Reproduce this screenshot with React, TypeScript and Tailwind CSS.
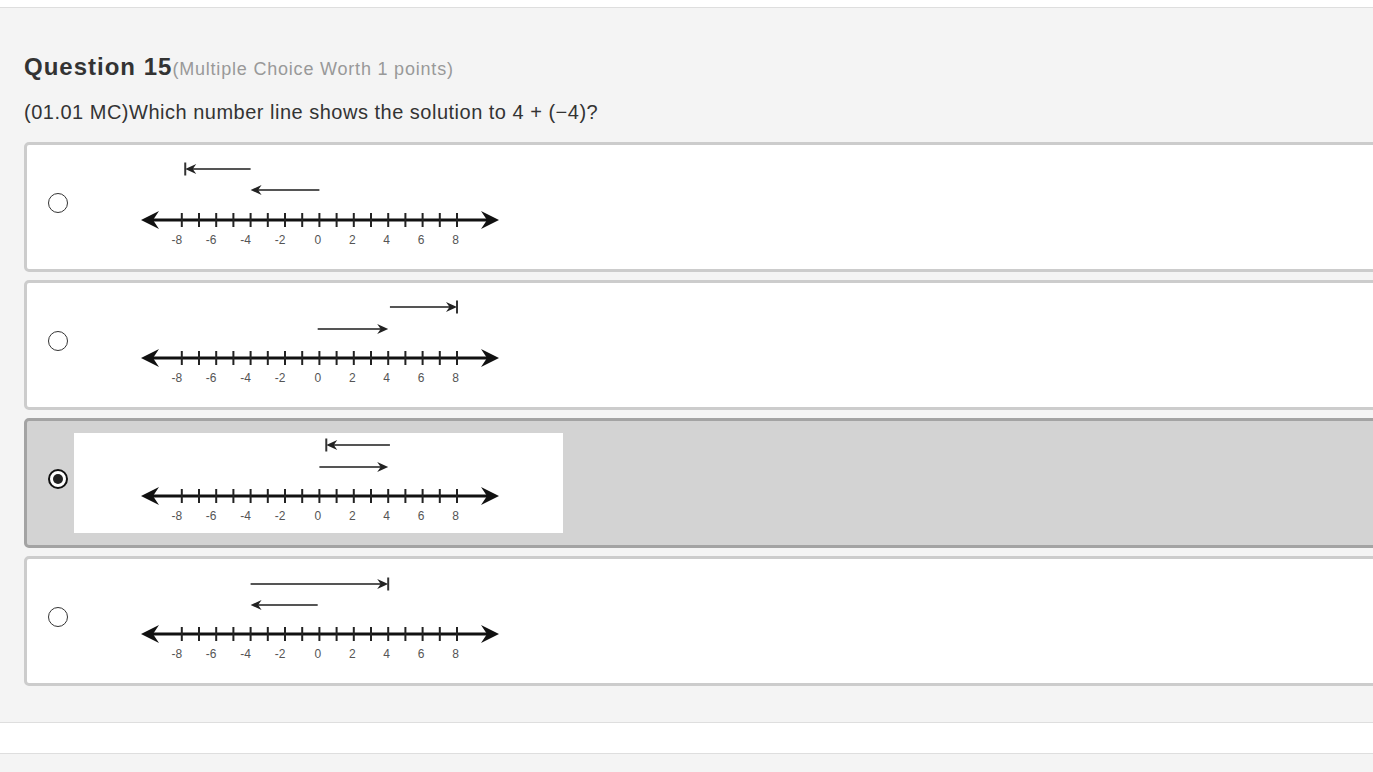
import React from 'react';

type Arrow = { from: number; to: number; y: number; bar?: boolean };

interface Choice {
  arrows: Arrow[];
  selected?: boolean;
}

// value -> x inside the 489px picture
const px = (n: number) => 245.4 + 17.2 * n;

const choices: Choice[] = [
  { arrows: [{ from: -4, to: -7.8, y: 12, bar: true }, { from: 0, to: -4, y: 33 }] },
  { arrows: [{ from: 4.1, to: 8, y: 12, bar: true }, { from: -0.1, to: 4, y: 34 }] },
  { arrows: [{ from: 4.1, to: 0.4, y: 12, bar: true }, { from: 0, to: 4, y: 34 }], selected: true },
  { arrows: [{ from: -4, to: 4, y: 13, bar: true }, { from: -0.1, to: -4, y: 34 }] },
];

const labels = [-8, -6, -4, -2, 0, 2, 4, 6, 8];
const ticks = Array.from({ length: 17 }, (_, i) => i - 8);

const NumberLine: React.FC<{ arrows: Arrow[] }> = ({ arrows }) => (
  <svg width="489" height="100" viewBox="0 0 489 100" className="block">
    {arrows.map((a, i) => {
      const x1 = px(a.from);
      const x2 = px(a.to);
      const dir = x2 > x1 ? 1 : -1;
      return (
        <g key={i}>
          <line x1={x1} y1={a.y} x2={x2 - dir * 4} y2={a.y} stroke="#555" strokeWidth="2.2" />
          <path
            d={`M${x2} ${a.y} L${x2 - dir * 11} ${a.y - 5} L${x2 - dir * 7.5} ${a.y} L${x2 - dir * 11} ${a.y + 5} Z`}
            fill="#222"
          />
          {a.bar && <line x1={x2} y1={a.y - 6.5} x2={x2} y2={a.y + 6.5} stroke="#333" strokeWidth="2" />}
        </g>
      );
    })}
    <line x1="75" y1="63" x2="417" y2="63" stroke="#111" strokeWidth="3" />
    <path d="M67 63 L85 54 L79 63 L85 72 Z" fill="#111" />
    <path d="M425 63 L407 54 L413 63 L407 72 Z" fill="#111" />
    {ticks.map((t) => (
      <line key={t} x1={px(t)} y1="56" x2={px(t)} y2="70" stroke="#222" strokeWidth="2" />
    ))}
    {labels.map((l) => (
      <text
        key={l}
        x={px(l) - (l < 0 ? 5 : 1.5)}
        y="87"
        textAnchor="middle"
        fontSize="12"
        fill="#555"
        fontFamily="'Liberation Sans', Arial, sans-serif"
      >
        {l}
      </text>
    ))}
  </svg>
);

const Radio: React.FC<{ checked?: boolean }> = ({ checked }) => (
  <div
    className={`w-[20px] h-[20px] rounded-full bg-white flex items-center justify-center ${
      checked ? 'border-2 border-[#111]' : 'border border-[#333]'
    }`}
  >
    {checked && <div className="w-[10px] h-[10px] rounded-full bg-[#222]" />}
  </div>
);

export default function App() {
  return (
    <div
      className="w-[1373px] h-[772px] overflow-hidden bg-[#f4f4f4] flex flex-col"
      style={{ fontFamily: "'Liberation Sans', Arial, sans-serif" }}
    >
      <div className="h-[8px] bg-white border-b border-[#dedede] shrink-0" />
      <div className="pl-[24px] pt-[45px]">
        <div className="flex items-baseline h-[28px]">
          <span className="text-[24px] font-bold text-[#333] leading-[28px] tracking-[1px]">Question 15</span>
          <span className="text-[18px] text-[#999] tracking-[0.8px]">(Multiple Choice Worth 1 points)</span>
        </div>
        <p className="mt-[19px] text-[20px] leading-[24px] text-[#333] tracking-[0.5px]">
          (01.01 MC)Which number line shows the solution to 4 + (−4)?
        </p>
        <div className="mt-[18px] flex flex-col gap-[8px]">
          {choices.map((c, i) => (
            <div
              key={i}
              className={`w-[1400px] h-[130px] rounded-[5px] border-[3px] flex items-center ${
                c.selected ? 'bg-[#d3d3d3] border-[#a3a3a3]' : 'bg-white border-[#cccccc]'
              }`}
            >
              <div className="w-[47px] flex justify-center pl-[15px] -mt-[8px]">
                <Radio checked={c.selected} />
              </div>
              <div className="bg-white">
                <NumberLine arrows={c.arrows} />
              </div>
            </div>
          ))}
        </div>
      </div>
      <div className="mt-[36px] h-[32px] bg-white border-y border-[#dedede] shrink-0" />
    </div>
  );
}
